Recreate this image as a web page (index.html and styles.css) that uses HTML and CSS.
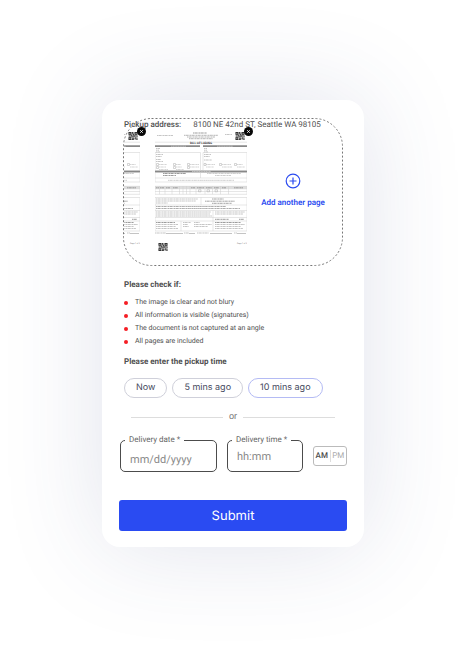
FILE: index.html
```html
<!DOCTYPE html>
<html lang="en">
<head>
<meta charset="utf-8">
<meta name="viewport" content="width=device-width, initial-scale=1">
<title>Pickup details</title>
<link rel="stylesheet" href="styles.css">
</head>
<body>
<svg class="defs" aria-hidden="true">
  <defs>
    <symbol id="qr" viewBox="0 0 10 9">
      <rect width="10" height="9" fill="#aaa"/>
      <path fill="#333" d="M0 0h3v3H0zM7 0h3v3H7zM0 6h3v3H0zM4 0h1v2H4zM5 2h1v2H5zM3 3h1v2H3zM1 4h1v1H1zM6 4h2v1H6zM9 4h1v2H9zM4 5h2v1H4zM7 6h1v2H7zM4 7h2v2H4zM9 7h1v2H9z"/>
      <path fill="#ddd" d="M1 1h1v1H1zM8 1h1v1H8zM1 7h1v1H1zM6 6h1v1H6zM8 5h1v1H8zM3 7h1v1H3zM6 8h1v1H6z"/>
    </symbol>
    <symbol id="page" viewBox="0 0 92 122">
      <use href="#qr" x="80" y="1" width="10" height="8"/>
      <g class="print">
        <path d="M2 4.500h16M70 3.500h7"/>
        <path d="M38 2h14" stroke="#333"/>
        <path d="M29 4.300h34M32 6h28M34 7.700h24" stroke="#666"/>
        <path d="M1 17.500h4M1 19.200h3M1 21h4M49 17.500h3M49 19.200h3M49 21h4"/>
        <path d="M1 23.500h7M1 25.500h6M1 28.500h5M1 30.500h7M49 23.500h7M49 25.500h6M49 29h8"/>
        <path d="M4 33.500h8M21 33.500h5M35 33.500h9M4 36h7M21 36h6M35 36h9M51 33.500h9M67 33.500h9M82 33.500h6M51 36h8M67 36h10M82 36h8M4 38.500h9M21 38.500h8" stroke="#aaa"/>
        <path d="M8 42.500h23M8 44.500h13" stroke="#333"/>
        <path d="M52 42.500h34M60 44.500h16M13 49.300h66" stroke="#999"/>
      </g>
      <text x="46" y="13.300" text-anchor="middle" class="doc-title">BILL OF LADING</text>
      <g fill="#888">
        <path d="M0 14.200h45v1.800H0zM48 14.200h44v1.800H48zM0 39.600h92v1.800H0z"/>
        <path d="M0 55.300h92v3H0z" fill="#ddd"/>
      </g>
      <g fill="none" stroke="#ddd" stroke-width=".6" stroke-dasharray="1.400 .3">
        <path d="M16 15.200h15M62 15.200h16M37 40.500h19"/>
      </g>
      <g fill="none" stroke="#ccc" stroke-width=".5">
        <path d="M0 11.200h92M0 21.500h45.500v18H0zM48 21.500h44v18H48z"/>
        <path d="M0 41.500h92v9.500H0zM0 47h92M45.500 41.500v5.500"/>
        <path d="M0 55.300h92v8H0zM0 60.500h92M4.500 55.300v8M10 55.300v8M17 55.300v8M24.500 55.300v8M28 55.300v8M31.500 55.300v8M35 55.300v8M41 55.300v8M50 55.300v8M57.500 55.300v8M65.500 55.300v8M73.500 55.300v8"/>
        <path d="M0 66.500h92v33.500H0zM46 66.500v7.500M0 74h92M0 79.500h92M0 86.500h92M58 79.500v20.500M0 90h92M26 90v10"/>
        <path d="M1.500 32.500h2v2h-2zM18.500 32.500h2v2h-2zM32.500 32.500h2v2h-2zM1.500 35.500h2v2h-2zM18.500 35.500h2v2h-2zM32.500 35.500h2v2h-2zM49 32.500h2v2h-2zM64.500 32.500h2v2h-2zM79.500 32.500h2v2h-2zM43.500 58.800h2.500v2H43.500zM52 58.800h2.500v2H52zM60 58.800h2.500v2H60z" stroke="#aaa"/>
      </g>
      <g class="print">
        <path d="M1 56.800h3M5 56.800h4M11 56.800h4M18 56.800h5M36 56.800h4M42 56.800h7M51 56.800h6M59 56.800h5M67 56.800h4M79 56.800h9" stroke="#555"/>
        <path d="M1 68h42M1 70h40M1 72h12"/>
        <path d="M57 68h12M50 70.200h30M57 72.300h20" stroke="#444"/>
        <path d="M1 75.500h70M1 77.500h84" stroke="#555"/>
        <path d="M1 81h55M1 83h54M60 81h30M1 85h56M60 83h28"/>
        <path d="M60 88.300h14M84 88.300h5M1 91.500h19M60 91.500h26" stroke="#333"/>
        <path d="M1 93.500h22M1 95.500h20M1 97.500h22M28 91.500h8M28 93.500h5M28 95.500h6M39 91.500h6M39 93.500h18M39 95.500h14M60 93.500h30M60 95.500h26M60 97.500h28"/>
        <path d="M0 102h11M29 102h5M42 102h12M79 102h3"/>
      </g>
      <path d="M11 102.500h17M34 102.500h6M55 102.500h22M82 102.500h9" fill="none" stroke="#888" stroke-width=".5"/>
      <text x="82" y="113" class="doc-foot">Page 1 of 2</text>
      <use href="#qr" x="3" y="112" width="10" height="8"/>
    </symbol>
  </defs>
</svg>

<main class="card">
  <form>
    <section class="upload">
      <svg class="outline" aria-hidden="true"><rect x=".5" y=".5" rx="28"/></svg>
      <p class="address"><strong>Pickup address:</strong><span>8100 NE 42nd ST, Seattle WA 98105</span></p>
      <div class="pages">
        <div class="thumb">
          <svg width="16" height="122" viewBox="76 0 16 122" aria-hidden="true"><use href="#page" width="92" height="122"/></svg>
          <button type="button" class="remove" aria-label="Remove page 1"><svg viewBox="0 0 9 9" aria-hidden="true"><path d="M3.300 3.300l2.400 2.400M5.700 3.300L3.300 5.700"/></svg></button>
        </div>
        <div class="thumb">
          <svg width="92" height="122" viewBox="0 0 92 122" aria-hidden="true"><use href="#page" width="92" height="122"/></svg>
          <button type="button" class="remove" aria-label="Remove page 2"><svg viewBox="0 0 9 9" aria-hidden="true"><path d="M3.300 3.300l2.400 2.400M5.700 3.300L3.300 5.700"/></svg></button>
        </div>
        <button type="button" class="add">
          <svg width="16" height="16" viewBox="0 0 16 16" aria-hidden="true"><circle cx="8" cy="8" r="6.800"/><path d="M8 4.500v7M4.500 8h7"/></svg>
          <span>Add another page</span>
        </button>
      </div>
    </section>

    <h2>Please check if:</h2>
    <ul class="checks">
      <li>The image is clear and not blury</li>
      <li>All information is visible (signatures)</li>
      <li>The document is not captured at an angle</li>
      <li>All pages are included</li>
    </ul>

    <h2>Please enter the pickup time</h2>
    <div class="chips">
      <button type="button">Now</button>
      <button type="button">5 mins ago</button>
      <button type="button" class="selected">10 mins ago</button>
    </div>
    <div class="or"><span>or</span></div>

    <div class="fields">
      <fieldset class="date">
        <legend><label for="date">Delivery date *</label></legend>
        <input id="date" type="text" placeholder="mm/dd/yyyy">
      </fieldset>
      <fieldset class="time">
        <legend><label for="time">Delivery time *</label></legend>
        <input id="time" type="text" placeholder="hh:mm">
      </fieldset>
      <div class="meridiem">
        <button type="button" class="on">AM</button>
        <button type="button">PM</button>
      </div>
    </div>
    <button type="submit" class="submit">Submit</button>
  </form>
</main>
</body>
</html>
```
FILE: styles.css
```css
* { box-sizing: border-box; }

body {
  margin: 0;
  padding: 100px 105px 106px 102px;
  background: #fff;
  color: #505050;
  font-family: Roboto, "Liberation Sans", sans-serif;
  font-size: 8px;
  line-height: 12px;
  text-rendering: geometricPrecision;
}

button, input {
  font: inherit;
  color: inherit;
  margin: 0;
  padding: 0;
  border: 0;
  background: none;
  text-rendering: inherit;
}

p, h2, ul { margin: 0; padding: 0; }

.defs { position: absolute; width: 0; height: 0; }
.doc-title { font-size: 3px; font-weight: 700; fill: #222; }
.doc-foot { font-size: 2px; fill: #777; }

.print {
  fill: none;
  stroke: #888;
  stroke-width: .6;
  stroke-dasharray: 1.6 .4 2.3 .3 .9 .4;
  opacity: .8;
}

.card {
  padding: 18px 17px 16px;
  border-radius: 18px;
  background: #fff;
  box-shadow: 0 0 100px rgba(55, 65, 130, .15);
}

.upload {
  position: relative;
  margin: 0 4px 0 5px;
  padding: 1px 0 13px;
}

.outline {
  position: absolute;
  top: 0;
  left: -1px;
  width: calc(100% + 1px);
  height: 100%;
  pointer-events: none;
}

.outline rect {
  width: calc(100% - 1px);
  height: calc(100% - 1px);
  fill: none;
  stroke: #777;
  stroke-dasharray: 2 2;
}

.address { display: flex; gap: 12px; white-space: nowrap; }
.address strong { font-weight: 500; }

.pages { display: flex; }
.thumb { position: relative; margin-right: 15px; }
.thumb + .thumb { margin-right: 0; }
.thumb > svg { display: block; }

.remove {
  position: absolute;
  top: -4px;
  right: -6px;
  width: 9px;
  height: 9px;
  border-radius: 50%;
  background: #080808;
}

.remove svg { display: block; stroke: #fff; stroke-width: 1; }

.add {
  flex: 1;
  display: flex;
  flex-direction: column;
  align-items: center;
  gap: 8px;
  padding: 42px 4px 0 0;
  color: #2b4bf0;
  font-weight: 600;
}

.add svg { fill: none; stroke: currentColor; stroke-width: 1.2; }

h2 { margin-left: 5px; font-size: 8px; font-weight: 700; }
.upload + h2 { margin-top: 13px; }

.checks {
  margin: 5px 0 8px 5px;
  list-style: none;
  font-size: 7px;
  line-height: 13px;
}

.checks li { display: flex; align-items: center; gap: 7px; }

.checks li::before {
  content: "";
  width: 4px;
  height: 4px;
  border-radius: 50%;
  background: #f51d24;
}

.chips { display: flex; gap: 5px; margin: 10px 0 0 5px; }

.chips button {
  height: 20px;
  padding: 0 11px;
  border: 1px solid #cfd0da;
  border-radius: 10px;
  color: #464a5e;
  font-family: Inter, sans-serif;
  font-size: 9px;
}

.chips .selected { border-color: #b4bbf4; }

.or {
  display: flex;
  align-items: center;
  gap: 6px;
  margin: 13px 12px 0;
  color: #777;
  font-size: 9px;
}

.or::before, .or::after {
  content: "";
  flex: 1;
  height: 1px;
  background: #ddd;
}

.fields { display: flex; align-items: flex-start; gap: 10px; margin: 11px 0 0 1px; }

fieldset {
  min-width: 0;
  height: 38px;
  margin: 0;
  padding: 0 9px;
  border: 1px solid #4c4c4c;
  border-radius: 5px;
}

.date { flex: 77; }
.time { flex: 56; }
legend { margin-left: -5px; padding: 0 4px; color: #666; white-space: nowrap; }

fieldset input {
  display: block;
  width: 100%;
  height: 26px;
  outline: 0;
  font-size: 11px;
}

.time input { height: 20px; }
::placeholder { color: #8a8a8a; opacity: 1; }

.meridiem {
  display: flex;
  align-items: center;
  width: 34px;
  height: 20px;
  margin-top: 12px;
  border: 1px solid #bbb;
  border-radius: 3px;
}

.meridiem button { flex: 1; color: #aaa; }
.meridiem .on { border-right: 1px solid #ddd; color: #4a4a4a; font-weight: 500; }

.submit {
  display: block;
  width: 100%;
  height: 31px;
  margin-top: 28px;
  border-radius: 3px;
  background: #2a4bf2;
  color: #fff;
  font-family: Inter, sans-serif;
  font-size: 13px;
}
```
